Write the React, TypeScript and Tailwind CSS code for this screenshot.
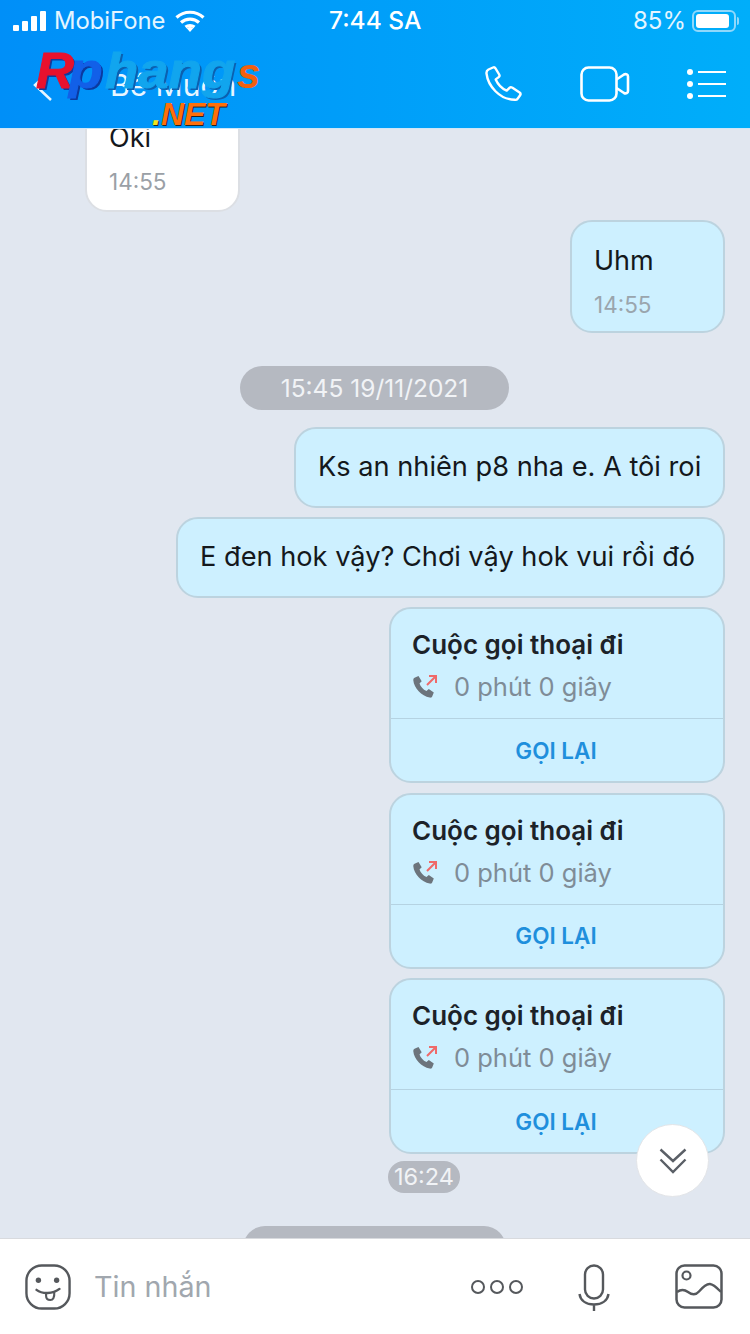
const font = { fontFamily: 'Inter, "Noto Sans", sans-serif' }

function CallCard() {
  return (
    <div className="w-[336px] h-[176px] self-end mr-[25px] rounded-[22px] border-2 border-[#bcd3df] bg-[#cdf0ff] flex flex-col">
      <div className="h-[110px] pl-[21px] pt-[19px] border-b border-[#b5d3e2]">
        <div className="text-[26px] leading-[34px] font-semibold text-[#1c2228]">Cuộc gọi thoại đi</div>
        <div className="flex items-center mt-[8px]">
          <svg width="26" height="26" viewBox="0 0 26 26" fill="none">
            <path d="M3 3.500 6.500 2l3.200 5.200-2.200 2.300c1 3 3.500 6 7 7.600l2.300-2 5 3.400-1.600 4c-.5 1-1.500 1.300-2.500 1.100C9.500 22 2 14 1.300 6.300 1.200 5 1.800 4 3 3.500Z" fill="#6c747c" />
            <path d="M15 11 23.500 2.500M17 2h7v7" stroke="#ef6a6a" strokeWidth="2" />
          </svg>
          <span className="ml-[16px] text-[25.500px] leading-[34px] text-[#7f8c97]">0 phút 0 giây</span>
        </div>
      </div>
      <div className="flex-1 flex items-center justify-center pt-[1px] pr-[2px] text-[22.500px] font-semibold text-[#1f8fdc]">GỌI LẠI</div>
    </div>
  )
}

function Bubble({ children, className }: { children: React.ReactNode; className: string }) {
  return (
    <div className={`self-end mr-[25px] h-[81px] flex items-center rounded-[22px] border-2 border-[#bcd3df] bg-[#cdf0ff] text-[27.200px] text-[#14181c] whitespace-nowrap ${className}`}>
      {children}
    </div>
  )
}

export default function App() {
  return (
    <div style={font} className="w-[750px] h-[1334px] flex flex-col overflow-hidden bg-[#e1e7f0] relative">
      {/* Header */}
      <header className="h-[129px] shrink-0 relative z-10 bg-gradient-to-r from-[#008ff8] to-[#00aefa] text-white border-b border-[#cfe6f8]">
        <div className="h-[41px] flex items-center pl-[13px] pr-[11px]">
          <div className="flex items-center w-[316px]">
            <div className="flex items-end gap-[3px] h-[20px]">
              <span className="w-[6px] h-[6px] rounded-[1px] bg-white" />
              <span className="w-[6px] h-[10px] rounded-[1px] bg-white" />
              <span className="w-[6px] h-[15px] rounded-[1px] bg-white" />
              <span className="w-[6px] h-[20px] rounded-[1px] bg-white" />
            </div>
            <span className="ml-[8px] text-[23.800px] text-[#e4f5ff]">MobiFone</span>
            <svg className="ml-[10px]" width="30" height="22" viewBox="0 0 30 22" fill="none">
              <path d="M1.500 7.500C9 .5 21 .5 28.500 7.500M6 12.500c5-4.500 13-4.500 18 0M10.500 17c2.500-2 6.500-2 9 0" stroke="#fff" strokeWidth="3.200" />
              <path d="M15 22l-3.500-4c2-1.400 5-1.400 7 0Z" fill="#fff" />
            </svg>
          </div>
          <span className="text-[24.500px] font-medium">7:44 SA</span>
          <div className="ml-auto flex items-center">
            <span className="text-[24px] text-[#e4f5ff]">85%</span>
            <div className="ml-[6px] w-[44px] h-[22px] rounded-[6px] border-2 border-[#8fd8fb] p-[2px]">
              <div className="w-[33px] h-full rounded-[3px] bg-white" />
            </div>
            <span className="ml-[1px] w-[2px] h-[8px] rounded-r bg-[#8fd8fb]" />
          </div>
        </div>
        <div className="h-[86px] flex items-center pl-[33px] pr-[24px]">
          <svg width="20" height="34" viewBox="0 0 20 34" fill="none" className="mt-[2px]">
            <path d="M18 2 2 17l16 15" stroke="#e8f6ff" strokeWidth="2.500" />
          </svg>
          <span className="ml-[57px] mt-[3px] text-[30px] text-[#e8f6ff]">Bé Muốn</span>
          <div className="ml-auto flex items-center">
            <svg className="mt-[2px]" width="40" height="38" viewBox="0 0 40 38" fill="none">
              <path d="M3.500 3.500 8 1.500c1-.4 2 0 2.500.8l3.700 6.200c.5.900.3 2-.5 2.600l-3 2.300c2 4.500 6 9 11 11.200l2.800-2.800c.7-.7 1.800-.8 2.600-.2l7.500 5c.9.600 1.100 1.800.5 2.700l-2.300 3.200c-.7 1-1.900 1.500-3.100 1.300C14.500 33.500 3 20 1.500 7.500c-.2-1.700.5-3.200 2-4Z" stroke="#fff" strokeWidth="2.400" strokeLinejoin="round" />
            </svg>
            <svg className="ml-[55px]" width="50" height="36" viewBox="0 0 50 36" fill="none">
              <rect x="1.500" y="1.500" width="35" height="33" rx="7" stroke="#fff" strokeWidth="2.600" />
              <path d="M36.500 13.500 44 8.500c2-1 4 0 4 2v14.500c0 2-2 3-4 2l-7.500-5" stroke="#fff" strokeWidth="2.600" strokeLinejoin="round" />
            </svg>
            <div className="ml-[57px] flex flex-col gap-[6px]">
              {[0, 1, 2].map(i => (
                <div key={i} className="flex items-center gap-[5px]">
                  <span className="w-[6px] h-[6px] rounded-full bg-white" />
                  <span className="w-[28px] h-[2px] bg-white" />
                </div>
              ))}
            </div>
          </div>
        </div>
        {/* Watermark logo over the header */}
        <div className="absolute left-[36px] top-[42px] w-[230px] h-[88px] pointer-events-none font-bold italic" style={{ fontFamily: '"Liberation Sans", sans-serif' }}>
          <span className="absolute left-0 top-[2px] origin-left scale-x-[1.05] text-[50px] leading-[54px] text-[#e8112d] [-webkit-text-stroke:1px_#e8112d] [text-shadow:2px_2px_0_#123a9c]">R</span>
          <span className="absolute left-[33px] top-[2px] origin-left scale-x-[1.1] text-[50px] leading-[54px] text-[#1260e8] [-webkit-text-stroke:1px_#1260e8] [text-shadow:2px_2px_0_#0b3aa0]">p</span>
          <span className="absolute left-[69px] top-[2px] origin-left scale-x-[1.09] text-[50px] leading-[54px] text-[#11a5ee] [-webkit-text-stroke:1px_#11a5ee] [text-shadow:2px_2px_0_#0b60b0]">hang</span>
          <span className="absolute left-[201px] top-[9px] text-[42px] leading-[46px] text-[#f0600f]">s</span>
          <span className="absolute left-[116px] top-[56px] text-[32px] leading-[32px] text-[#ff6f0a] [text-shadow:1px_1px_0_#222]">
            <span className="text-[#f4e21a]">.</span>NET
          </span>
        </div>
      </header>

      {/* Messages */}
      <main className="flex-1 min-h-0 overflow-hidden flex flex-col">
        <div className="ml-[85px] -mt-[21px] w-[155px] h-[104px] shrink-0 rounded-[22px] border-2 border-[#dcdfe4] bg-white pl-[22px] pt-[10px]">
          <div className="text-[27px] leading-[36px] text-[#14181c]">Oki</div>
          <div className="mt-[12px] text-[22.500px] leading-[28px] text-[#9aa0a6]">14:55</div>
        </div>
        <div className="self-end mt-[8px] mr-[25px] w-[155px] h-[113px] shrink-0 rounded-[22px] border-2 border-[#bcd3df] bg-[#cdf0ff] pl-[22px] pt-[21px]">
          <div className="text-[27px] leading-[36px] text-[#14181c]">Uhm</div>
          <div className="mt-[12px] text-[22.500px] leading-[28px] text-[#9aa5ad]">14:55</div>
        </div>
        <div className="ml-[240px] mt-[33px] w-[269px] h-[44px] shrink-0 rounded-full bg-[#b5b9c1] flex items-center justify-center text-[24.500px] text-[#f1f3f6]">15:45 19/11/2021</div>
        <Bubble className="mt-[17px] w-[431px] shrink-0 pl-[22px]">Ks an nhiên p8 nha e. A tôi roi</Bubble>
        <Bubble className="mt-[9px] w-[549px] shrink-0 pl-[22px]">E đen hok vậy? Chơi vậy hok vui rồi đó</Bubble>
        <div className="mt-[9px] flex flex-col gap-[9.500px] shrink-0">
          <CallCard />
          <CallCard />
          <CallCard />
        </div>
        <div className="ml-[388px] mt-[7px] w-[72px] h-[32px] shrink-0 rounded-full bg-[#b5b9c1] flex items-center justify-center text-[23.500px] text-[#f1f3f6]">16:24</div>
        <div className="ml-[243px] mt-[33px] w-[263px] h-[44px] shrink-0 rounded-full bg-[#b5b9c1]" />
      </main>

      {/* Scroll to bottom button */}
      <div className="absolute left-[636px] top-[1124px] w-[73px] h-[73px] rounded-full bg-white border border-[#e3e5e8] flex items-center justify-center">
        <svg width="28" height="26" viewBox="0 0 28 26" fill="none">
          <path d="M1.500 1.500 14 13 26.500 1.500M1.500 11.500 14 24l12.500-12.500" stroke="#5a5f66" strokeWidth="2.400" />
        </svg>
      </div>

      {/* Composer */}
      <footer className="h-[96px] shrink-0 relative z-10 bg-white border-t border-[#d8dade] flex items-center pl-[25px] pr-[27px]">
        <svg width="46" height="46" viewBox="0 0 48 48" fill="none">
          <rect x="1.500" y="1.500" width="45" height="45" rx="16" stroke="#55585c" strokeWidth="2.500" />
          <circle cx="14" cy="17" r="2.800" fill="#55585c" />
          <circle cx="33" cy="17" r="2.800" fill="#55585c" />
          <path d="M12 27c6 4.500 17 4.500 24-1" stroke="#55585c" strokeWidth="2.500" strokeLinecap="round" />
          <path d="M22 30.500v2.500c0 3 2 4.500 4.500 4.500S31 35.500 30.500 29.500" stroke="#55585c" strokeWidth="2.200" />
        </svg>
        <span className="ml-[23px] text-[28.700px] text-[#a1a7ae]">Tin nhắn</span>
        <div className="ml-auto flex items-center gap-[5px]">
          <span className="w-[14px] h-[14px] rounded-full border-[2.500px] border-[#55585c]" />
          <span className="w-[14px] h-[14px] rounded-full border-[2.500px] border-[#55585c]" />
          <span className="w-[14px] h-[14px] rounded-full border-[2.500px] border-[#55585c]" />
        </div>
        <svg className="ml-[55px] mt-[2px]" width="32" height="48" viewBox="0 0 32 48" fill="none">
          <rect x="7" y="1.500" width="18" height="33" rx="9" stroke="#55585c" strokeWidth="2.400" />
          <path d="M1.500 30c1 7 7 10.500 14.500 10.500S29.500 37 30.500 30M16 40.500V47" stroke="#55585c" strokeWidth="2.400" />
        </svg>
        <svg className="ml-[65px]" width="48" height="45" viewBox="0 0 48 45" fill="none">
          <rect x="1.500" y="1.500" width="45" height="42" rx="8" stroke="#55585c" strokeWidth="2.500" />
          <circle cx="11.500" cy="11.500" r="4" stroke="#55585c" strokeWidth="2.200" />
          <path d="M2 28c4-3 7-3 11 0s8 3 11-.5 7-8 11-7.500 8 5 11 8" stroke="#55585c" strokeWidth="2.400" />
        </svg>
      </footer>
    </div>
  )
}
